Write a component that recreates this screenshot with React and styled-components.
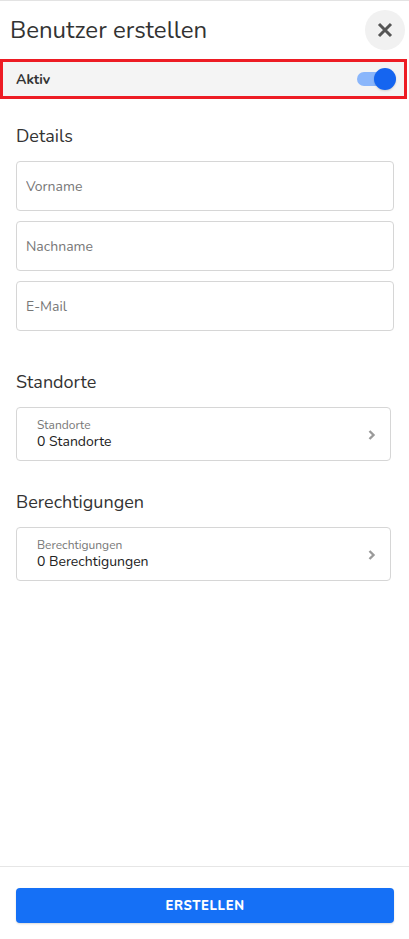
import React from "react";
import styled, { createGlobalStyle } from "styled-components";

const Global = createGlobalStyle`
  html, body { margin: 0; padding: 0; background: #fff; }
  body { font-family: "Nunito", "Lato", "Noto Sans", sans-serif; color: #333; }
  * { box-sizing: border-box; }
`;

const Page = styled.div`
  height: 939px;
  display: flex;
  flex-direction: column;
  border-top: 1px solid #e3e3e3;
`;

const Header = styled.header`
  height: 58px;
  display: flex;
  align-items: center;
  justify-content: space-between;
  padding: 0 4px 0 10px;
`;

const Title = styled.h1`
  margin: 0;
  font-size: 24px;
  font-weight: 400;
  color: #333;
  line-height: 30px;
`;

const CloseButton = styled.button`
  width: 40px;
  height: 40px;
  border-radius: 50%;
  border: none;
  background: #f1f1f1;
  display: flex;
  align-items: center;
  justify-content: center;
  padding: 0;
  cursor: pointer;
`;

const ActiveBar = styled.div`
  width: 407px;
  height: 40px;
  border: 3px solid #ed1c24;
  background: #f4f4f4;
  display: flex;
  align-items: center;
  justify-content: space-between;
  padding: 0 8px 0 13px;
`;

const ActiveLabel = styled.span`
  font-size: 14px;
  font-weight: 700;
  color: #333;
`;

const Toggle = styled.div`
  position: relative;
  width: 39px;
  height: 22px;
  display: flex;
  align-items: center;
`;

const Track = styled.div`
  width: 34px;
  height: 14px;
  border-radius: 7px;
  background: #8ab6fb;
`;

const Thumb = styled.div`
  position: absolute;
  right: 0;
  top: 0;
  width: 22px;
  height: 22px;
  border-radius: 50%;
  background: #1565f0;
  box-shadow: 0 1px 2px rgba(0, 0, 0, 0.15);
`;

const Content = styled.main`
  flex: 1;
  padding: 0 15px 0 16px;
`;

const Section = styled.section`
  margin-top: ${(p) => p.$top}px;
`;

const SectionTitle = styled.h2`
  margin: 0 0 13px;
  font-size: 18px;
  font-weight: 400;
  line-height: 24px;
  color: #333;
`;

const Fields = styled.div`
  display: flex;
  flex-direction: column;
  gap: 10px;
`;

const Input = styled.input`
  width: 378px;
  height: 50px;
  border: 1px solid #d6d6d6;
  border-radius: 4px;
  padding: 0 9px;
  font-family: inherit;
  font-size: 14px;
  color: #333;
  outline: none;
  &::placeholder { color: #777; }
`;

const SelectCard = styled.button`
  width: 375px;
  height: 54px;
  border: 1px solid #d6d6d6;
  border-radius: 4px;
  background: #fff;
  display: flex;
  align-items: center;
  justify-content: space-between;
  padding: 1px 14px 0 20px;
  font-family: inherit;
  text-align: left;
  cursor: pointer;
`;

const CardText = styled.div`
  display: flex;
  flex-direction: column;
`;

const CardLabel = styled.span`
  font-size: 12px;
  line-height: 15px;
  color: #777;
`;

const CardValue = styled.span`
  font-size: 14px;
  line-height: 18px;
  color: #222;
`;

const Footer = styled.footer`
  border-top: 1px solid #e6e6e6;
  padding: 21px 15px 16px 16px;
`;

const SubmitButton = styled.button`
  width: 378px;
  height: 35px;
  border: none;
  border-radius: 4px;
  background: #1570f6;
  color: #fff;
  font-family: inherit;
  font-size: 13px;
  font-weight: 800;
  letter-spacing: 0.6px;
  box-shadow: 0 1px 2px rgba(0, 0, 0, 0.15);
  cursor: pointer;
`;

const CloseIcon = () => (
  <svg width="18" height="18" viewBox="0 0 18 18">
    <path d="M3 3 L15 15 M15 3 L3 15" stroke="#555" strokeWidth="3" strokeLinecap="butt" />
  </svg>
);

const Chevron = () => (
  <svg width="8" height="12" viewBox="0 0 8 12">
    <path d="M1.5 2 L5.5 6 L1.5 10" fill="none" stroke="#9a9a9a" strokeWidth="2.4" />
  </svg>
);

export default function App() {
  return (
    <>
      <Global />
      <Page>
        <Header>
          <Title>Benutzer erstellen</Title>
          <CloseButton aria-label="Schließen">
            <CloseIcon />
          </CloseButton>
        </Header>
        <ActiveBar>
          <ActiveLabel>Aktiv</ActiveLabel>
          <Toggle>
            <Track />
            <Thumb />
          </Toggle>
        </ActiveBar>
        <Content>
          <Section $top={25}>
            <SectionTitle>Details</SectionTitle>
            <Fields>
              <Input placeholder="Vorname" />
              <Input placeholder="Nachname" />
              <Input placeholder="E-Mail" />
            </Fields>
          </Section>
          <Section $top={39}>
            <SectionTitle>Standorte</SectionTitle>
            <SelectCard>
              <CardText>
                <CardLabel>Standorte</CardLabel>
                <CardValue>0 Standorte</CardValue>
              </CardText>
              <Chevron />
            </SelectCard>
          </Section>
          <Section $top={29}>
            <SectionTitle>Berechtigungen</SectionTitle>
            <SelectCard>
              <CardText>
                <CardLabel>Berechtigungen</CardLabel>
                <CardValue>0 Berechtigungen</CardValue>
              </CardText>
              <Chevron />
            </SelectCard>
          </Section>
        </Content>
        <Footer>
          <SubmitButton>ERSTELLEN</SubmitButton>
        </Footer>
      </Page>
    </>
  );
}
